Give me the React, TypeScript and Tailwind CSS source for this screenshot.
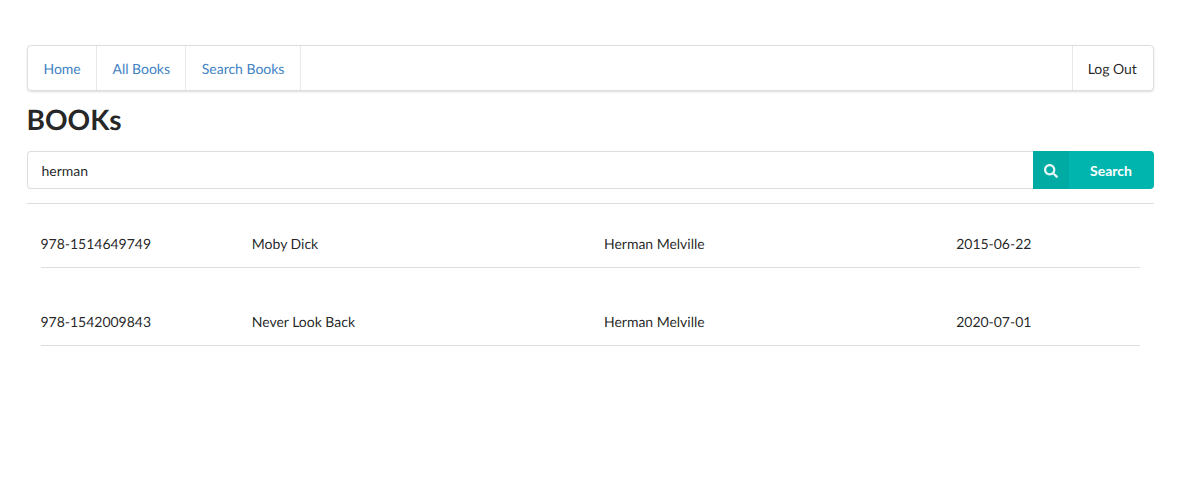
import React from "react";
import { FaSearch } from "react-icons/fa";

const books = [
  { isbn: "978-1514649749", title: "Moby Dick", author: "Herman Melville", date: "2015-06-22" },
  { isbn: "978-1542009843", title: "Never Look Back", author: "Herman Melville", date: "2020-07-01" },
];

const links = ["Home", "All Books", "Search Books"];

export default function App() {
  return (
    <main className="min-h-[487px] bg-white pt-[45px] pr-[33px] pl-[26.5px] font-['Lato',sans-serif] text-[14px] leading-5 text-black/87 antialiased [text-rendering:geometricPrecision]">
      <nav className="flex h-[46px] rounded-[4px] border border-[#22242626] pl-[0.2px] shadow-[0_1px_2px_0_rgba(34,36,38,0.15)]">
        {links.map((label) => (
          <a key={label} href="#" className="flex items-center border-r border-[#2224261a] pt-[2px] pr-[15px] pl-[15.8px] tracking-[-0.02px] text-[#4183c4] nth-3:pr-[15.5px]">
            {label}
          </a>
        ))}
        <a href="#" className="ml-auto flex items-center border-l border-[#2224261a] pt-[2px] pr-[16.2px] pl-[14.8px] tracking-[-0.04px]">
          Log Out
        </a>
      </nav>
      <h1 className="mt-[10px] text-[28px] leading-9 font-bold">BOOKs</h1>
      <form className="mt-[14px] flex h-[38px]">
        <input
          defaultValue="herman"
          className="min-w-0 flex-1 rounded-l-[4px] border border-r-0 border-[#22242626] px-[14px] pt-[2px] outline-none"
        />
        <button type="button" className="flex w-[121px] overflow-hidden rounded-r-[4px] bg-[#00b5ad] font-bold text-white">
          <span className="flex h-full w-9 items-center justify-center bg-black/5 pt-px">
            <FaSearch size={14} className="opacity-90" />
          </span>
          <span className="flex h-full flex-1 items-center justify-center pt-px pr-px">Search</span>
        </button>
      </form>
      <hr className="mt-[14px] border-[#22242626]" />
      <section className="px-[14px] pt-[16px]">
        {books.map((book) => (
          <div key={book.isbn} className="mb-[30px] h-12 border-b border-[#22242626] pt-[14px]">
            <div className="-mr-[27.5px] grid grid-cols-[3fr_5fr_5fr_3fr] tracking-[-0.02px]">
              <span>{book.isbn}</span>
              <span>{book.title}</span>
              <span>{book.author}</span>
              <span>{book.date}</span>
            </div>
          </div>
        ))}
      </section>
    </main>
  );
}
